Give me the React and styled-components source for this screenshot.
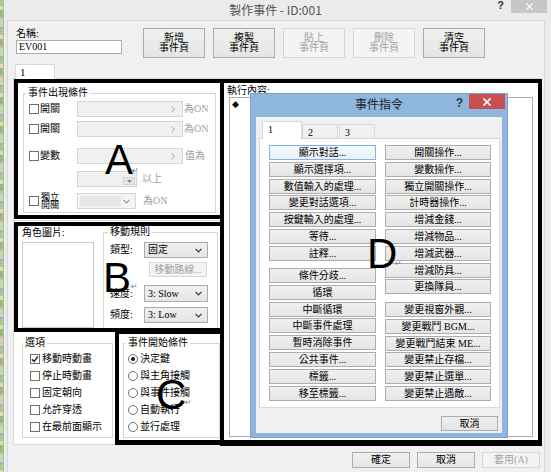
import React from "react";
import styled, { createGlobalStyle } from "styled-components";

const SERIF = `"Liberation Serif", "Noto Sans CJK TC", serif`;
const SANS = `"Noto Sans CJK TC", "Liberation Sans", sans-serif`;

const GlobalStyle = createGlobalStyle`
  * { box-sizing: border-box; }
  html, body { margin: 0; padding: 0; background: #ebebeb; }
  body { font-family: ${SERIF}; font-size: 10px; line-height: 12px; color: #000; }
`;

/* ---------- window chrome ---------- */
const Screen = styled.div`
  width: 551px;
  height: 472px;
  display: flex;
  overflow: hidden;
  background: #ebebeb;
`;

const DesktopEdge = styled.div`
  width: 3px;
  flex-shrink: 0;
  background: repeating-linear-gradient(
    180deg,
    #a9c98a 0 6px,
    #e4dca2 6px 10px,
    #8fbf73 10px 17px,
    #d9b6a4 17px 19px,
    #c4dba8 19px 27px,
    #9ab2d6 27px 29px
  );
`;

const Window = styled.div`
  flex: 1;
  min-width: 0;
  display: flex;
  flex-direction: column;
  border-left: 1px solid #b5b5b5;
  background: #ebebeb;
`;

const TitleBar = styled.div`
  height: 20px;
  flex-shrink: 0;
  display: grid;
  grid-template-columns: 1fr auto 1fr;
  align-items: start;
  padding-right: 4px;
`;

const WinTitle = styled.div`
  font-family: ${SANS};
  font-size: 12px;
  line-height: 19px;
  color: #555;
  white-space: nowrap;
`;

const TitleControls = styled.div`
  justify-self: end;
  display: flex;
  align-items: flex-start;
  gap: 7px;
`;

const HelpMark = styled.span`
  font-family: "Liberation Sans", sans-serif;
  font-weight: bold;
  font-size: ${(p) => p.$size || 11}px;
  line-height: ${(p) => p.$lh || 10}px;
  color: #333;
`;

const CloseButton = styled.div`
  width: 36px;
  height: ${(p) => p.$h}px;
  background: ${(p) => p.$bg};
  display: flex;
  align-items: center;
  justify-content: center;
`;

const Client = styled.div`
  flex: 1;
  margin: 0 6px 0 3px;
  border: 1px solid #d6d6d6;
  border-bottom: none;
  background: #f0f0f0;
  display: flex;
  flex-direction: column;
`;

/* ---------- header ---------- */
const Header = styled.div`
  display: flex;
  padding: 7px 0 0 8px;
`;

const NameBlock = styled.div`
  width: 127px;
  display: flex;
  flex-direction: column;
`;

const Label = styled.div`
  font-size: 10px;
  line-height: ${(p) => p.$lh || 11}px;
  white-space: nowrap;
  padding: ${(p) => p.$pad || "0"};
`;

const NameInput = styled.div`
  margin-top: 1px;
  width: 106px;
  height: 14px;
  border: 1px solid #abadb3;
  background: #fff;
  padding: 0 2px;
  font-size: 10px;
  line-height: 12px;
`;

const PageButtons = styled.div`
  display: flex;
  gap: 8px;
`;

const PageButton = styled.div`
  width: 62px;
  height: 30px;
  border: 1px solid ${(p) => (p.$off ? "#d6d6d6" : "#acacac")};
  background: ${(p) => (p.$off ? "#f4f4f4" : "linear-gradient(#f0f0f0, #e5e5e5)")};
  color: ${(p) => (p.$off ? "#a3a3a3" : "#000")};
  display: flex;
  flex-direction: column;
  align-items: center;
  justify-content: center;
  font-size: 10px;
  line-height: 10px;
`;

const TabStrip = styled.div`
  display: flex;
  margin-top: 6px;
  padding-left: 7px;
`;

const PageTab = styled.div`
  position: relative;
  z-index: 1;
  width: 40px;
  height: 15px;
  margin-bottom: -1px;
  background: #fff;
  border: 1px solid #d9d9d9;
  border-bottom: none;
  padding-left: 4px;
  font-size: 11px;
  line-height: 14px;
`;

const TabPage = styled.div`
  margin: 0 3px 0 5px;
  height: 367px;
  border: 1px solid #d9d9d9;
  background: #fff;
  display: flex;
  align-items: flex-start;
`;

const Footer = styled.div`
  display: flex;
  justify-content: flex-end;
  gap: 7px;
  padding: 7px 4px 0 0;
`;

const DialogButton = styled.div`
  width: ${(p) => p.$w || 58}px;
  height: ${(p) => p.$h || 16}px;
  border: 1px solid ${(p) => (p.$off ? "#d6d6d6" : "#adadad")};
  background: ${(p) => (p.$off ? "#f4f4f4" : "linear-gradient(#f0f0f0, #e5e5e5)")};
  color: ${(p) => (p.$off ? "#a3a3a3" : "#000")};
  font-size: 10px;
  line-height: ${(p) => (p.$h || 16) - 2}px;
  text-align: center;
  white-space: nowrap;
`;

/* ---------- annotation frames ---------- */
const Annotation = styled.div`
  position: relative;
  flex-shrink: 0;
  border: 4px solid #000;
`;

const ConditionFrame = styled(Annotation)`
  width: 210px;
  height: 140px;
  padding: 5px 0 0 5px;
`;

const FrameGap = styled.div`
  height: 3px;
  flex-shrink: 0;
  background: linear-gradient(transparent 1px, #d5d5d5 1px 2px, transparent 2px);
`;

const MovementFrame = styled(Annotation)`
  width: 210px;
  height: 110px;
  padding: 2px 0 0 4px;
  display: flex;
  overflow: hidden;
`;

const TriggerFrame = styled(Annotation)`
  width: 109px;
  height: 115px;
  margin-top: -2px;
  border-bottom-width: 5px;
  padding: 4px 0 0 4px;
`;

const CommandFrame = styled(Annotation)`
  width: 322px;
  height: 367px;
  margin-left: -4px;
  border-bottom-width: 6px;
`;

const BigLetter = styled.span`
  position: absolute;
  left: ${(p) => p.$x}px;
  top: ${(p) => p.$y}px;
  z-index: 5;
  font-family: "Liberation Sans", Arial, sans-serif;
  font-size: 42px;
  line-height: 42px;
  color: #000;
`;

const BreakMark = styled.span`
  position: absolute;
  left: ${(p) => p.$x}px;
  top: ${(p) => p.$y}px;
  z-index: 5;
  font-family: "DejaVu Sans", sans-serif;
  font-size: 8px;
  line-height: 8px;
  color: #7a7a7a;
`;

/* ---------- groups & controls ---------- */
const LeftCol = styled.div`
  width: 210px;
  flex-shrink: 0;
  display: flex;
  flex-direction: column;
`;

const Group = styled.fieldset`
  margin: ${(p) => p.$m || "0"};
  padding: 0;
  min-width: 0;
  width: ${(p) => p.$w}px;
  height: ${(p) => p.$h}px;
  border: 1px solid #d5d5d5;
  flex-shrink: 0;
`;

const Legend = styled.legend`
  margin-left: ${(p) => p.$ml ?? 2}px;
  padding: 0 2px;
  font-size: 10px;
  line-height: 10px;
  white-space: nowrap;
`;

const ConditionRows = styled.div`
  padding: 3px 0 0 5px;
`;

const CondRow = styled.div`
  display: flex;
  align-items: center;
  height: 16px;
  margin-top: ${(p) => p.$mt || 0}px;
`;

const CheckCell = styled.div`
  width: 48px;
  flex-shrink: 0;
  display: flex;
  align-items: center;
  gap: 1px;
`;

const Text = styled.span`
  font-size: 10px;
  line-height: 12px;
  white-space: nowrap;
  color: ${(p) => p.$c || "#000"};
  margin-left: ${(p) => p.$ml || 0}px;
`;

const TwoLine = styled.span`
  font-size: 9px;
  line-height: 8.5px;
  white-space: nowrap;
  margin-left: 1px;
`;

const CheckBox = styled.span`
  width: 10px;
  height: 10px;
  flex-shrink: 0;
  border: 1px solid #707070;
  background: #fff;
  display: inline-flex;
  align-items: center;
  justify-content: center;
`;

const RadioDot = styled.span`
  width: 10px;
  height: 10px;
  flex-shrink: 0;
  border-radius: 50%;
  border: 1px solid #707070;
  background: #fff;
  display: inline-flex;
  align-items: center;
  justify-content: center;
  &::after {
    content: "";
    width: 4px;
    height: 4px;
    border-radius: 50%;
    background: ${(p) => (p.$on ? "#1a1a1a" : "transparent")};
  }
`;

const DisabledCombo = styled.div`
  width: ${(p) => p.$w}px;
  height: 16px;
  flex-shrink: 0;
  border: 1px solid #d6d6d6;
  background: #f0f0f0;
  display: flex;
  align-items: center;
  justify-content: flex-end;
  padding-right: 7px;
`;

const SpinBox = styled.div`
  width: 60px;
  height: 16px;
  flex-shrink: 0;
  border: 1px solid #d6d6d6;
  background: #f0f0f0;
  display: flex;
  align-items: flex-end;
  justify-content: flex-end;
  padding: 1px;
`;

const SpinDown = styled.div`
  width: 12px;
  height: 8px;
  border: 1px solid #d2d2d2;
  background: #e6e6e6;
  display: flex;
  align-items: center;
  justify-content: center;
`;

const DropCombo = styled.div`
  width: 59px;
  height: 16px;
  flex-shrink: 0;
  border: 1px solid #d6d6d6;
  background: #f4f4f4;
  display: flex;
  align-items: center;
  justify-content: space-between;
  padding: 0 5px 0 2px;
`;

const DropInner = styled.div`
  width: 41px;
  height: 10px;
  background: #e6e6e6;
`;

const ImageCol = styled.div`
  width: 72px;
  flex-shrink: 0;
  display: flex;
  flex-direction: column;
`;

const PictureBox = styled.div`
  margin-top: 4px;
  height: 100px;
  border: 1px solid #cacaca;
  background: #fff;
`;

const MoveBody = styled.div`
  padding: 5px 0 0 6px;
`;

const SelRow = styled.div`
  display: flex;
  align-items: center;
  margin-top: ${(p) => p.$mt || 0}px;
`;

const SelLabel = styled.span`
  width: 34px;
  font-size: 10px;
  line-height: 12px;
  white-space: nowrap;
`;

const Select = styled.div`
  width: 64px;
  height: ${(p) => p.$h || 16}px;
  border: 1px solid #acacac;
  background: linear-gradient(#f0f0f0, #e5e5e5);
  display: flex;
  align-items: center;
  justify-content: space-between;
  padding: 0 5px 0 3px;
  font-size: 10px;
  line-height: 12px;
  white-space: nowrap;
`;

const RouteButton = styled.div`
  margin: 4px 0 0 39px;
  width: 58px;
  height: 15px;
  border: 1px solid #d6d6d6;
  background: #f4f4f4;
  color: #a3a3a3;
  font-size: 10px;
  line-height: 13px;
  text-align: center;
  white-space: nowrap;
`;

const BottomRow = styled.div`
  display: flex;
  height: 112px;
`;

const OptionsArea = styled.div`
  width: 101px;
  flex-shrink: 0;
  padding: 6px 0 0 8px;
`;

const ChoiceList = styled.div`
  display: flex;
  flex-direction: column;
  gap: 5px;
  padding: 5px 0 0 ${(p) => p.$pl}px;
`;

const ChoiceItem = styled.div`
  display: flex;
  align-items: center;
  gap: 2px;
  height: 12px;
`;

/* ---------- execution content + command dialog ---------- */
const ListBox = styled.div`
  margin: 1px 0 0 5px;
  width: 304px;
  height: 340px;
  border: 1px solid #abadb3;
  background: #fff;
  padding: 2px 0 0 2px;
  font-family: "DejaVu Sans", sans-serif;
  font-size: 9px;
  line-height: 9px;
`;

const CmdDialog = styled.div`
  position: absolute;
  left: 26px;
  top: 10px;
  width: 258px;
  height: 345px;
  z-index: 2;
  border: 1px solid #7aa3cf;
  background: #8fb6df;
  display: flex;
  flex-direction: column;
`;

const CmdTitleBar = styled.div`
  height: 23px;
  flex-shrink: 0;
  display: grid;
  grid-template-columns: 1fr auto 1fr;
  align-items: start;
`;

const CmdTitle = styled.div`
  font-family: ${SANS};
  font-size: 12px;
  line-height: 20px;
  color: #1e1e1e;
  white-space: nowrap;
`;

const CmdControls = styled.div`
  justify-self: end;
  display: flex;
  align-items: flex-start;
  gap: 6px;
  margin-right: 2px;
`;

const CmdClient = styled.div`
  flex: 1;
  margin: 0 5px 4px;
  background: #f0f0f0;
  display: flex;
  flex-direction: column;
  padding-top: 5px;
`;

const CmdTabs = styled.div`
  display: flex;
  align-items: flex-end;
  height: 17px;
  padding-left: 6px;
  margin-bottom: -1px;
  position: relative;
  z-index: 1;
`;

const CmdTab = styled.div`
  width: ${(p) => p.$w}px;
  height: ${(p) => (p.$active ? 18 : 15)}px;
  margin-left: ${(p) => p.$ml || 0}px;
  background: ${(p) => (p.$active ? "#fff" : "#f0f0f0")};
  border: 1px solid #d9d9d9;
  border-bottom: ${(p) => (p.$active ? "none" : "1px solid #d9d9d9")};
  padding: 2px 0 0 5px;
  font-size: 10px;
  line-height: 11px;
`;

const CmdPanel = styled.div`
  margin: 0 2px 0 3px;
  height: 270px;
  border: 1px solid #d9d9d9;
  background: #fff;
  display: flex;
  gap: 9px;
  padding: 6px 0 0 9px;
`;

const CmdColumn = styled.div`
  width: ${(p) => p.$w}px;
  display: flex;
  flex-direction: column;
  gap: 1.8px;
`;

const CmdButton = styled.div`
  height: 15px;
  flex-shrink: 0;
  margin-top: ${(p) => p.$gap || 0}px;
  border: 1px solid ${(p) => (p.$focus ? "#7eb4ea" : "#adadad")};
  background: ${(p) => (p.$focus ? "linear-gradient(#f4f9fd, #e8f1fa)" : "linear-gradient(#f0f0f0, #e5e5e5)")};
  font-size: 10px;
  line-height: 13px;
  text-align: center;
  white-space: nowrap;
`;

const CmdFooter = styled.div`
  display: flex;
  justify-content: flex-end;
  padding: 8px 4px 0 0;
`;

/* ---------- icons ---------- */
const Cross = ({ size = 8, w = 1.4 }) => (
  <svg width={size} height={size} viewBox="0 0 8 8">
    <path d="M1 1 L7 7 M7 1 L1 7" stroke="#fff" strokeWidth={w} strokeLinecap="square" />
  </svg>
);

const Check = () => (
  <svg width="8" height="8" viewBox="0 0 8 8">
    <path d="M1 4.2 L3.1 6.4 L7 1.4" fill="none" stroke="#1a1a1a" strokeWidth="1.4" />
  </svg>
);

const RightArrow = () => (
  <svg width="4" height="7" viewBox="0 0 4 7">
    <path d="M0.5 0.5 L3.3 3.5 L0.5 6.5" fill="none" stroke="#a6a6a6" strokeWidth="1" />
  </svg>
);

const Chevron = ({ color = "#333" }) => (
  <svg width="7" height="5" viewBox="0 0 7 5">
    <path d="M0.5 0.8 L3.5 3.8 L6.5 0.8" fill="none" stroke={color} strokeWidth="1.2" />
  </svg>
);

const TinyDown = () => (
  <svg width="5" height="3" viewBox="0 0 5 3">
    <path d="M0 0 L5 0 L2.5 3 Z" fill="#8a8a8a" />
  </svg>
);

/* ---------- data ---------- */
const pageButtons = [
  { a: "新增", b: "事件頁" },
  { a: "複製", b: "事件頁" },
  { a: "貼上", b: "事件頁", off: true },
  { a: "刪除", b: "事件頁", off: true },
  { a: "清空", b: "事件頁" },
];

const options = [
  { t: "移動時動畫", on: true },
  { t: "停止時動畫" },
  { t: "固定朝向" },
  { t: "允許穿透" },
  { t: "在最前面顯示" },
];

const triggers = [
  { t: "決定鍵", on: true },
  { t: "與主角接觸" },
  { t: "與事件接觸" },
  { t: "自動執行" },
  { t: "並行處理" },
];

const leftCmds = [
  ["顯示對話...", "顯示選擇項...", "數值輸入的處理...", "變更對話選項...", "按鍵輸入的處理...", "等待...", "註釋..."],
  ["條件分歧...", "循環", "中斷循環", "中斷事件處理", "暫時消除事件", "公共事件...", "標籤...", "移至標籤..."],
];

const rightCmds = [
  ["開關操作...", "變數操作...", "獨立開關操作...", "計時器操作...", "增減金錢...", "增減物品...", "增減武器...", "增減防具...", "更換隊員..."],
  ["變更視窗外觀...", "變更戰鬥 BGM...", "變更戰鬥結束 ME...", "變更禁止存檔...", "變更禁止選單...", "變更禁止遇敵..."],
];

const CommandColumn = ({ groups, w, gap }) => (
  <CmdColumn $w={w}>
    {groups.map((g, gi) =>
      g.map((t, i) => (
        <CmdButton key={t} $gap={gi > 0 && i === 0 ? gap : 0} $focus={gi === 0 && i === 0 && t === "顯示對話..."}>
          {t}
        </CmdButton>
      ))
    )}
  </CmdColumn>
);

export default function App() {
  return (
    <>
      <GlobalStyle />
      <Screen>
        <DesktopEdge />
        <Window>
          <TitleBar>
            <span />
            <WinTitle>製作事件 - ID:001</WinTitle>
            <TitleControls>
              <HelpMark>?</HelpMark>
              <CloseButton $bg="#c7c7c7" $h={13}>
                <Cross size={7} w={1.3} />
              </CloseButton>
            </TitleControls>
          </TitleBar>

          <Client>
            <Header>
              <NameBlock>
                <Label>名稱:</Label>
                <NameInput>EV001</NameInput>
              </NameBlock>
              <PageButtons>
                {pageButtons.map((b) => (
                  <PageButton key={b.a} $off={b.off}>
                    <span>{b.a}</span>
                    <span>{b.b}</span>
                  </PageButton>
                ))}
              </PageButtons>
            </Header>

            <TabStrip>
              <PageTab>1</PageTab>
            </TabStrip>

            <TabPage>
              <LeftCol>
                <ConditionFrame>
                  <Group $w={193} $h={125}>
                    <Legend $ml={2}>事件出現條件</Legend>
                    <ConditionRows>
                      <CondRow>
                        <CheckCell>
                          <CheckBox />
                          <Text>開關</Text>
                        </CheckCell>
                        <DisabledCombo $w={106}>
                          <RightArrow />
                        </DisabledCombo>
                        <Text $c="#a0a0a0" $ml={1}>為ON</Text>
                      </CondRow>
                      <CondRow $mt={4}>
                        <CheckCell>
                          <CheckBox />
                          <Text>開關</Text>
                        </CheckCell>
                        <DisabledCombo $w={106}>
                          <RightArrow />
                        </DisabledCombo>
                        <Text $c="#a0a0a0" $ml={1}>為ON</Text>
                      </CondRow>
                      <CondRow $mt={11}>
                        <CheckCell>
                          <CheckBox />
                          <Text>變數</Text>
                        </CheckCell>
                        <DisabledCombo $w={106}>
                          <RightArrow />
                        </DisabledCombo>
                        <Text $c="#a0a0a0" $ml={2}>值為</Text>
                      </CondRow>
                      <CondRow $mt={7}>
                        <CheckCell />
                        <SpinBox>
                          <SpinDown>
                            <TinyDown />
                          </SpinDown>
                        </SpinBox>
                        <Text $c="#a0a0a0" $ml={5}>以上</Text>
                      </CondRow>
                      <CondRow $mt={6}>
                        <CheckCell>
                          <CheckBox />
                          <TwoLine>
                            獨立
                            <br />
                            開關
                          </TwoLine>
                        </CheckCell>
                        <DropCombo>
                          <DropInner />
                          <Chevron color="#9a9a9a" />
                        </DropCombo>
                        <Text $c="#a0a0a0" $ml={7}>為ON</Text>
                      </CondRow>
                    </ConditionRows>
                  </Group>
                  <BigLetter $x={87} $y={56}>A</BigLetter>
                  <BreakMark $x={114} $y={84}>↵</BreakMark>
                </ConditionFrame>

                <FrameGap />

                <MovementFrame>
                  <ImageCol>
                    <Label $lh={10}>角色圖片:</Label>
                    <PictureBox />
                  </ImageCol>
                  <Group $w={115} $h={110} $m="-1px 0 0 9px">
                    <Legend $ml={4}>移動規則</Legend>
                    <MoveBody>
                      <SelRow>
                        <SelLabel>類型:</SelLabel>
                        <Select>
                          <span>固定</span>
                          <Chevron />
                        </Select>
                      </SelRow>
                      <RouteButton>移動路線...</RouteButton>
                      <SelRow $mt={8}>
                        <SelLabel>速度:</SelLabel>
                        <Select $h={17}>
                          <span>3: Slow</span>
                          <Chevron />
                        </Select>
                      </SelRow>
                      <SelRow $mt={5}>
                        <SelLabel>頻度:</SelLabel>
                        <Select>
                          <span>3: Low</span>
                          <Chevron />
                        </Select>
                      </SelRow>
                    </MoveBody>
                  </Group>
                  <BigLetter $x={85} $y={31}>B</BigLetter>
                  <BreakMark $x={113} $y={57}>↵</BreakMark>
                </MovementFrame>

                <BottomRow>
                  <OptionsArea>
                    <Group $w={91} $h={100}>
                      <Legend $ml={0}>選項</Legend>
                      <ChoiceList $pl={7}>
                        {options.map((o) => (
                          <ChoiceItem key={o.t}>
                            <CheckBox>{o.on && <Check />}</CheckBox>
                            <Text>{o.t}</Text>
                          </ChoiceItem>
                        ))}
                      </ChoiceList>
                    </Group>
                  </OptionsArea>
                  <TriggerFrame>
                    <Group $w={97} $h={100}>
                      <Legend $ml={2}>事件開始條件</Legend>
                      <ChoiceList $pl={4}>
                        {triggers.map((o) => (
                          <ChoiceItem key={o.t}>
                            <RadioDot $on={o.on} />
                            <Text>{o.t}</Text>
                          </ChoiceItem>
                        ))}
                      </ChoiceList>
                    </Group>
                    <BigLetter $x={37} $y={40}>C</BigLetter>
                    <BreakMark $x={66} $y={65}>↵</BreakMark>
                  </TriggerFrame>
                </BottomRow>
              </LeftCol>

              <CommandFrame>
                <Label $lh={10} $pad="3px 0 0 3px">執行內容:</Label>
                <ListBox>◆</ListBox>
                <CmdDialog>
                  <CmdTitleBar>
                    <span />
                    <CmdTitle>事件指令</CmdTitle>
                    <CmdControls>
                      <HelpMark $size={12} $lh={18}>?</HelpMark>
                      <CloseButton $bg="#c75050" $h={15}>
                        <Cross size={8} w={1.6} />
                      </CloseButton>
                    </CmdControls>
                  </CmdTitleBar>
                  <CmdClient>
                    <CmdTabs>
                      <CmdTab $w={40} $active>1</CmdTab>
                      <CmdTab $w={36}>2</CmdTab>
                      <CmdTab $w={36} $ml={1}>3</CmdTab>
                    </CmdTabs>
                    <CmdPanel>
                      <CommandColumn groups={leftCmds} w={107} gap={5.4} />
                      <CommandColumn groups={rightCmds} w={106} gap={5.8} />
                    </CmdPanel>
                    <CmdFooter>
                      <DialogButton $w={57} $h={15}>取消</DialogButton>
                    </CmdFooter>
                  </CmdClient>
                </CmdDialog>
                <BigLetter $x={143} $y={150}>D</BigLetter>
                <BreakMark $x={171} $y={177}>↵</BreakMark>
              </CommandFrame>
            </TabPage>

            <Footer>
              <DialogButton>確定</DialogButton>
              <DialogButton>取消</DialogButton>
              <DialogButton $off>套用(A)</DialogButton>
            </Footer>
          </Client>
        </Window>
      </Screen>
    </>
  );
}
